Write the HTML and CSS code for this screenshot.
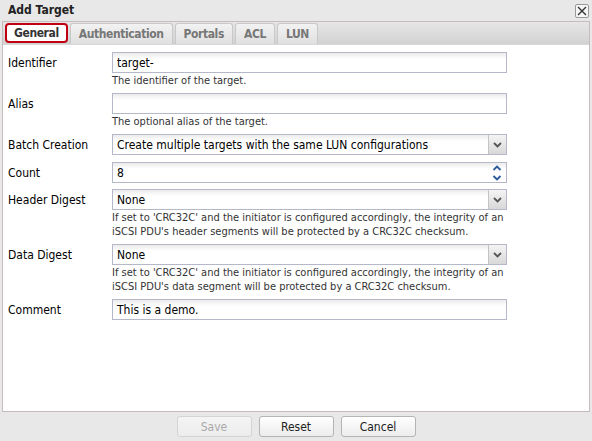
FILE: index.html
```html
<!DOCTYPE html>
<html>
<head>
<meta charset="utf-8">
<link rel="stylesheet" href="styles.css">
</head>
<body>
<div class="window">
  <div class="titlebar">
    <span class="title">Add Target</span>
    <span class="close"><svg width="10" height="10" viewBox="0 0 10 10"><path d="M1 1L9 9M9 1L1 9" stroke="#333" stroke-width="1.4"/></svg></span>
  </div>
  <div class="panel">
    <div class="tabbar">
      <div class="tab active">General</div>
      <div class="tab">Authentication</div>
      <div class="tab">Portals</div>
      <div class="tab">ACL</div>
      <div class="tab">LUN</div>
    </div>
    <div class="content">
      <div class="row">
        <div class="label">Identifier</div>
        <div class="field">
          <div class="input">target-</div>
          <div class="help">The identifier of the target.</div>
        </div>
      </div>
      <div class="row">
        <div class="label">Alias</div>
        <div class="field">
          <div class="input"></div>
          <div class="help">The optional alias of the target.</div>
        </div>
      </div>
      <div class="row tall">
        <div class="label">Batch Creation</div>
        <div class="field">
          <div class="input select"><span class="val">Create multiple targets with the same LUN configurations</span><span class="arrow"><svg width="9" height="6" viewBox="0 0 9 6"><path d="M1 1L4.5 4.5L8 1" stroke="#555" stroke-width="1.8" fill="none"/></svg></span></div>
        </div>
      </div>
      <div class="row mid">
        <div class="label">Count</div>
        <div class="field">
          <div class="input spin"><span class="val">8</span><span class="spinbtn"><svg width="10" height="20" viewBox="0 0 10 20"><path d="M1.5 7L5 3.5L8.5 7" stroke="#2a5a9a" stroke-width="1.8" fill="none"/><path d="M1.5 13L5 16.5L8.5 13" stroke="#2a5a9a" stroke-width="1.8" fill="none"/></svg></span></div>
        </div>
      </div>
      <div class="row">
        <div class="label">Header Digest</div>
        <div class="field">
          <div class="input select"><span class="val">None</span><span class="arrow"><svg width="9" height="6" viewBox="0 0 9 6"><path d="M1 1L4.5 4.5L8 1" stroke="#555" stroke-width="1.8" fill="none"/></svg></span></div>
          <div class="help">If set to 'CRC32C' and the initiator is configured accordingly, the integrity of an iSCSI PDU's header segments will be protected by a CRC32C checksum.</div>
        </div>
      </div>
      <div class="row">
        <div class="label">Data Digest</div>
        <div class="field">
          <div class="input select"><span class="val">None</span><span class="arrow"><svg width="9" height="6" viewBox="0 0 9 6"><path d="M1 1L4.5 4.5L8 1" stroke="#555" stroke-width="1.8" fill="none"/></svg></span></div>
          <div class="help">If set to 'CRC32C' and the initiator is configured accordingly, the integrity of an iSCSI PDU's data segment will be protected by a CRC32C checksum.</div>
        </div>
      </div>
      <div class="row">
        <div class="label">Comment</div>
        <div class="field">
          <div class="input">This is a demo.</div>
        </div>
      </div>
    </div>
  </div>
  <div class="footer">
    <button class="btn disabled">Save</button>
    <button class="btn">Reset</button>
    <button class="btn">Cancel</button>
  </div>
</div>
</body>
</html>
```
FILE: styles.css
```css
* { box-sizing: border-box; }
html, body { margin: 0; padding: 0; }
body {
  background: #e8e8e8;
  font-family: Tahoma, "DejaVu Sans Condensed", "DejaVu Sans", sans-serif;
  font-size: 12px;
  color: #000;
}
.window {
  width: 592px;
  height: 441px;
  display: flex;
  flex-direction: column;
}
.titlebar {
  height: 21px;
  display: flex;
  align-items: center;
  justify-content: space-between;
  padding: 0 3px 2px 8px;
}
.title {
  font-weight: bold;
  color: #222;
  font-size: 12px;
}
.close {
  width: 14px;
  height: 14px;
  border: 1px solid #999;
  border-radius: 2px;
  background: #f6f6f6;
  display: flex;
  align-items: center;
  justify-content: center;
  margin-top: 2px;
}
.panel {
  margin: 0 2px;
  border: 1px solid #c6bcbc;
  flex: 1;
  display: flex;
  flex-direction: column;
  background: #fff;
}
.tabbar {
  height: 23px;
  background: linear-gradient(#e6e6e6, #d2d2d2);
  display: flex;
  align-items: flex-start;
  padding: 1px 0 0 2px;
  gap: 2px;
  border-bottom: 1px solid #d8d8d8;
}
.tab {
  height: 21px;
  padding: 0 8px;
  border: 1px solid #c8c8c8;
  border-bottom: none;
  border-radius: 3px 3px 0 0;
  background: linear-gradient(#f2f2f2, #e0e0e0);
  color: #777;
  font-weight: bold;
  letter-spacing: -0.4px;
  display: flex;
  align-items: center;
}
.tab.active {
  background: #fff;
  color: #333;
  border: 2px solid #c00010;
  border-radius: 4px;
  height: 20px;
  padding: 0 7px;
}
.content {
  flex: 1;
  padding: 7px 0 0 0;
}
.row {
  display: grid;
  grid-template-columns: 109px 395px;
  margin-bottom: 5px;
}
.row.tall { margin-bottom: 7px; }
.row.mid { margin-bottom: 6px; }
.label {
  padding-left: 5px;
  height: 21px;
  display: flex;
  align-items: center;
}
.input {
  height: 21px;
  border: 1px solid #b5b8c8;
  background: linear-gradient(#ebebeb, #fff 6px);
  padding: 0 4px;
  display: flex;
  align-items: center;
}
.select, .spin { padding-right: 0; }
.val { flex: 1; }
.arrow {
  width: 18px;
  height: 19px;
  border-left: 1px solid #c4c4c4;
  background: linear-gradient(#f4f4f4, #d8d8d8);
  display: flex;
  align-items: center;
  justify-content: center;
}
.spinbtn {
  width: 18px;
  height: 19px;
  display: flex;
  align-items: center;
  justify-content: center;
}
.help {
  font-size: 11px;
  color: #333;
  line-height: 14px;
  padding-top: 1px;
}
.footer {
  height: 29px;
  display: flex;
  justify-content: center;
  align-items: center;
  gap: 7px;
}
.btn {
  width: 75px;
  height: 21px;
  font-family: inherit;
  font-size: 12px;
  color: #222;
  border: 1px solid #b4b4b4;
  border-radius: 3px;
  background: linear-gradient(#ffffff, #ececec);
  padding: 0;
}
.btn.disabled {
  color: #aaa;
  border-color: #d4d4d4;
  background: linear-gradient(#f4f4f4, #ececec);
}
```
